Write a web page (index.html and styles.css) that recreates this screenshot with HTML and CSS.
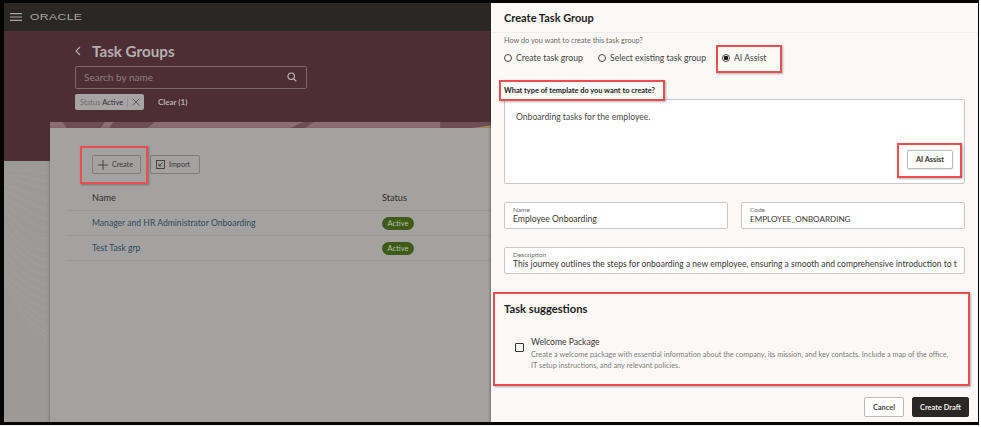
FILE: index.html
```html
<!DOCTYPE html>
<html lang="en">
<head>
<meta charset="utf-8">
<title>Task Groups</title>
<link rel="stylesheet" href="styles.css">
</head>
<body>
<div class="frame">
  <div class="page">
    <header class="topbar">
      <svg class="burger" width="12" height="8" viewBox="0 0 12 8"><path d="M0 .7h12M0 4h12M0 7.3h12" stroke="#a8a6a3" stroke-width="1.2"/></svg>
      <span class="logo">ORACLE</span>
    </header>
    <main class="main">
      <svg class="contour" width="46" height="210" viewBox="0 0 46 210" fill="none" stroke="#a6a4a1" stroke-width=".5">
        <path d="M0 8c14 2 30 0 46 6M0 13c13 2 27 2 46 9M0 18c12 2 24 4 46 12M0 24c14 3 25 9 46 17M0 30c16 4 26 14 46 20M0 37c15 5 25 17 46 22M0 44c14 6 24 20 46 24M2 52c12 8 22 25 44 26M4 60c10 10 20 30 42 30M0 67c12 10 21 30 46 32M0 74c12 10 22 30 46 32M0 83c11 11 21 28 46 32M0 92c10 12 20 26 46 32M0 101c10 13 23 25 46 32M0 110c10 14 26 24 46 32M3 120c10 13 25 23 43 30M6 130c10 12 24 22 40 28M10 138c9 12 22 21 36 28M14 146c8 12 20 20 32 28M19 155c7 10 17 17 27 23M24 164c6 8 14 14 22 20"/>
      </svg>
      <div class="hero">
        <div class="title-row">
          <svg class="back" width="6" height="10" viewBox="0 0 6 10" fill="none"><path d="M5 1 1 5l4 4" stroke="#b5aeb0" stroke-width="1.1"/></svg>
          <h1 class="title">Task Groups</h1>
        </div>
        <div class="search">
          <span class="search-text">Search by name</span>
          <svg width="10" height="10" viewBox="0 0 10 10" fill="none" stroke="#c2bcbe" stroke-width="1.1"><circle cx="4.2" cy="4.2" r="3.2"/><path d="m6.600 6.600 2.800 2.800"/></svg>
        </div>
        <div class="filters">
          <span class="chip"><span class="chip-key">Status&nbsp;</span><b class="chip-val">Active</b><i class="chip-sep"></i>
            <svg width="8" height="8" viewBox="0 0 8 8" fill="none" stroke="#55514e" stroke-width=".9"><path d="m.5.5 7 7M7.500.5l-7 7"/></svg>
          </span>
          <span class="clear">Clear (1)</span>
        </div>
      </div>
      <div class="card-wrap">
        <svg class="strip" width="440" height="6" viewBox="0 0 440 6" preserveAspectRatio="none">
          <rect width="440" height="6" fill="#6f4d55"/>
          <path d="M0 0h6l2 6H0zM26 0h4l-2 6h-4zM50 0h70l-6 6H46zM125 0h60v6h-64zM228 0h24l14 6h-46zM270 0h34l-10 6h-16zM340 0h12l-3 6h-6z" fill="#8b6d74"/>
          <path d="M200 6l18-5 12 5zM300 0h16l-14 6h-10zM320 0h8l7 6h-6z" fill="#a98f58"/>
          <path d="M395 0h4l-2 6h-4z" fill="#8f3f55"/>
        </svg>
        <section class="card">
          <div class="actions">
            <button class="btn btn-create"><svg width="10" height="10" viewBox="0 0 10 10"><path d="M5 0v10M0 5h10" stroke="#3e3c3a" stroke-width=".9"/></svg>Create</button>
            <button class="btn btn-import"><svg width="9" height="9" viewBox="0 0 9 9" fill="none" stroke="#3e3c3a" stroke-width=".9"><rect x=".5" y=".5" width="8" height="8"/><path d="M6.500 2.500 3 6M3 3.500V6h2.500"/></svg>Import</button>
          </div>
          <div class="table">
            <div class="row row-head"><span class="cell-name">Name</span><span>Status</span></div>
            <div class="row"><a class="cell-name link">Manager and HR Administrator Onboarding</a><span class="badge">Active</span></div>
            <div class="row"><a class="cell-name link">Test Task grp</a><span class="badge">Active</span></div>
          </div>
        </section>
      </div>
    </main>

    <aside class="drawer">
      <div class="drawer-head">Create Task Group</div>
      <div class="drawer-body">
        <p class="question">How do you want to create this task group?</p>
        <div class="radios">
          <label class="radio radio-1"><i class="dot"></i>Create task group</label>
          <label class="radio radio-2"><i class="dot"></i>Select existing task group</label>
          <label class="radio"><i class="dot dot-on"></i>AI Assist</label>
        </div>
        <p class="template-label">What type of template do you want to create?</p>
        <div class="textarea">
          <p class="textarea-text">Onboarding tasks for the employee.</p>
          <button class="btn-ai">AI Assist</button>
        </div>
        <div class="field-row">
          <div class="field"><span class="field-label">Name</span><span class="field-value">Employee Onboarding</span></div>
          <div class="field"><span class="field-label">Code</span><span class="field-value field-code">EMPLOYEE_ONBOARDING</span></div>
        </div>
        <div class="field field-desc"><span class="field-label">Description</span><span class="field-value desc-value">This journey outlines the steps for onboarding a new employee, ensuring a smooth and comprehensive introduction to t</span></div>
        <h2 class="suggest-title">Task suggestions</h2>
        <div class="suggest">
          <i class="check"></i>
          <div>
            <div class="suggest-name">Welcome Package</div>
            <p class="suggest-text">Create a welcome package with essential information about the company, its mission, and key contacts. Include a map of the office, IT setup instructions, and any relevant policies.</p>
          </div>
        </div>
      </div>
      <div class="drawer-foot">
        <button class="foot-btn foot-cancel">Cancel</button>
        <button class="foot-btn foot-draft">Create Draft</button>
      </div>
    </aside>

    <i class="mark mark-create"></i>
    <i class="mark mark-radio"></i>
    <i class="mark mark-label"></i>
    <i class="mark mark-ai"></i>
    <i class="mark mark-suggest"></i>
  </div>
</div>
</body>
</html>
```

FILE: styles.css
```css
* { box-sizing: border-box; }
html, body { margin: 0; height: 100%; background: #fff; overflow: hidden; }
body { font-family: Lato, "Open Sans", "Liberation Sans", sans-serif; }
p, h1, h2 { margin: 0; }
button { font-family: inherit; padding: 0; cursor: default; }

.frame { width: 979px; height: 425px; background: #050505; padding: 3px 1px 3px 4px; }
.page { position: relative; width: 100%; height: 100%; display: flex; flex-direction: column; overflow: hidden; background: #9c9a98; }

.topbar { height: 28px; flex: none; background: #2b2724; display: flex; align-items: center; padding-left: 6px; }
.burger { margin-right: 8px; margin-top: -1px; }
.logo { font: 400 9.5px "Liberation Sans", sans-serif; letter-spacing: .3px; color: #a9a7a4; transform: scaleX(1.28); transform-origin: left center; margin-top: -1px; }

.main { position: relative; flex: 1; display: flex; flex-direction: column; min-height: 0;
  background: linear-gradient(#4d2e34 0, #4d2e34 130px, #9c9a98 130px); }
.contour { position: absolute; left: 0; top: 130px; }

.hero { position: relative; padding: 9px 0 0 71px; height: 91px; flex: none; }
.title-row { display: flex; align-items: center; height: 22px; }
.back { margin-right: 11px; }
.title { font-size: 15.200px; font-weight: 700; color: #b5afb0; line-height: 22px; }
.search { width: 232px; height: 23px; margin-top: 4px; border: 1px solid #7d676b; border-radius: 2px; display: flex; align-items: center; justify-content: space-between; padding: 0 9px 2px 8px; }
.search-text { font-size: 10px; line-height: 12px; color: #8f7f82; }
.filters { display: flex; align-items: center; margin-top: 5px; }
.chip { width: 69px; height: 16px; background: #a5a3a3; border-radius: 2px; display: flex; align-items: center; padding-left: 5px; font-size: 7.500px; white-space: pre; }
.chip-key { color: #6e6c6b; }
.chip-val { color: #33302e; font-weight: 400; }
.chip-sep { width: 1px; height: 9px; background: #93918f; margin: 0 4px; }
.clear { margin-left: 14px; font-size: 8px; font-weight: 700; color: #b9b1b3; }

.card-wrap { position: relative; flex: 1; margin-left: 46px; display: flex; flex-direction: column; min-height: 0; }
.strip { display: block; flex: none; width: 100%; }
.card { flex: 1; background: #a3a2a0; padding: 27px 0 0 17px; box-shadow: -1px 0 2px rgba(60,60,60,.35); }
.actions { display: flex; gap: 9px; padding-left: 25px; }
.btn { height: 19px; background: #a3a2a0; border: 1px solid #7f7e7c; border-radius: 2px; display: flex; align-items: center; font-size: 7.200px; color: #3b3937; }
.btn-create { width: 49px; padding-left: 5px; gap: 4px; }
.btn-import { width: 50px; padding-left: 5px; gap: 4px; }
.table { margin-top: 9px; }
.row { height: 25px; display: flex; align-items: center; border-bottom: 1px solid #979694; font-size: 8.600px; color: #2f2d2b; }
.row-head { height: 28px; padding-top: 1px; font-size: 9.200px; }
.cell-name { width: 315px; padding-left: 25px; }
.link { color: #2f4a5c; }
.badge { width: 32px; height: 13px; border-radius: 7px; background: #3e5b1a; color: #b6c2a4; font-size: 7.500px; line-height: 13px; text-align: center; }

.drawer { position: absolute; top: 0; right: 0; bottom: 0; width: 487px; background: #faf9f7; display: flex; flex-direction: column; box-shadow: -1px 0 2px rgba(40,40,40,.4); }
.drawer-head { height: 30px; flex: none; padding-left: 13px; font-size: 11px; font-weight: 700; line-height: 30px; color: #1f1c1a; border-bottom: 1px solid #f0efed; }
.drawer-body { flex: 1; padding: 3px 13px 0; min-height: 0; }
.question { font-size: 7.300px; line-height: 10px; color: #6b6967; }
.radios { display: flex; margin-top: 5px; height: 13px; align-items: center; }
.radio { display: flex; align-items: center; font-size: 8.600px; color: #45423f; }
.radio-1 { width: 94px; }
.radio-2 { width: 124px; }
.dot { width: 8px; height: 8px; border: 1px solid #4a4745; border-radius: 50%; margin-right: 4px; flex: none; }
.dot-on { background: radial-gradient(circle, #1f1c1a 0 2px, transparent 2.5px); }
.template-label { margin-top: 20px; font-size: 7.400px; line-height: 13px; font-weight: 700; color: #24211f; }
.textarea { height: 85px; margin-top: 2px; background: #fff; border: 1px solid #c9c8c6; border-radius: 2px; padding: 11px 11px 0; display: flex; flex-direction: column; }
.textarea-text { font-size: 8.600px; line-height: 12px; color: #4a4745; }
.btn-ai { align-self: flex-end; margin: 27px 0 0 0; width: 46px; height: 19px; background: #fff; border: 1px solid #bdbcba; border-radius: 2px; font-size: 7.300px; font-weight: 700; color: #35322f; box-shadow: 0 1px 1px rgba(0,0,0,.12); }
.field-row { display: flex; gap: 13px; margin-top: 18px; }
.field { flex: 1; height: 27px; background: #fff; border: 1px solid #c9c8c6; border-radius: 2px; padding: 3px 8px 0; display: flex; flex-direction: column; }
.field-label { font-size: 6.500px; line-height: 8px; color: #6b6967; }
.field-value { font-size: 8.600px; line-height: 11px; color: #3a3735; }
.field-code { font-size: 8.100px; }
.desc-value { font-size: 8.500px; white-space: nowrap; }
.field-desc { margin-top: 18px; }
.suggest-title { margin-top: 27px; font-size: 11.200px; line-height: 16px; font-weight: 700; color: #1f1c1a; }
.suggest { display: flex; margin-top: 19px; padding-left: 11px; }
.check { width: 9px; height: 9px; border: 1px solid #35322f; border-radius: 1px; margin: 7px 7px 0 0; flex: none; }
.suggest-name { font-size: 8.600px; line-height: 13px; color: #3a3735; }
.suggest-text { font-size: 7.300px; line-height: 11px; color: #7d7b79; width: 425px; margin-top: 0; }
.drawer-foot { flex: none; height: 40px; display: flex; justify-content: flex-end; gap: 8px; padding: 15px 9px 0 0; }
.foot-btn { height: 20px; border-radius: 2px; font-size: 7.400px; font-weight: 700; }
.foot-cancel { width: 40px; background: #fff; border: 1px solid #bdbcba; color: #45423f; }
.foot-draft { width: 57px; background: #2b2724; border: 1px solid #2b2724; color: #efeeec; }

.mark { position: absolute; display: block; border: 2px solid #ea4f50; box-shadow: 1px 1px 2px rgba(0,0,0,.3); }
.mark-create { left: 76px; top: 143px; width: 68px; height: 38px; }
.mark-radio { left: 712px; top: 42px; width: 66px; height: 28px; }
.mark-label { left: 495px; top: 77px; width: 166px; height: 21px; }
.mark-ai { left: 893px; top: 140px; width: 65px; height: 35px; }
.mark-suggest { left: 489px; top: 289px; width: 477px; height: 94px; }
```
